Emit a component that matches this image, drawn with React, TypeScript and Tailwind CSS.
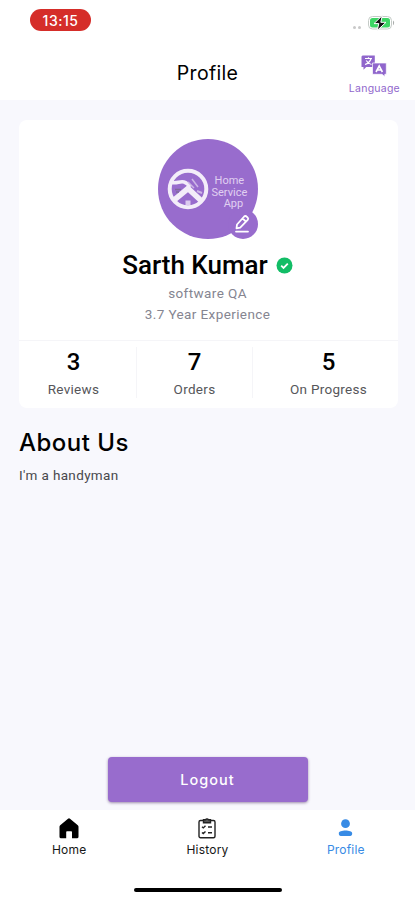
const stats = [
  { value: "3", label: "Reviews", cell: "w-[117px] pr-2" },
  { value: "7", label: "Orders", cell: "w-[117px] border-x border-[#f5f5f8]" },
  { value: "5", label: "On Progress", cell: "w-[145px] pl-1.5" },
];

const BatteryIcon = () => (
  <svg width="27" height="16" viewBox="0 0 27 16">
    <rect x="0.5" y="1.5" width="23" height="12.5" rx="4" fill="#fff" stroke="#c5cbc7" />
    <rect x="2" y="3" width="20" height="9.5" rx="2.5" fill="#3dd564" />
    <path d="M25 5.5c1.5.7 1.5 4 0 4.7z" fill="#a9adab" />
    <path d="M14.3 0.5 6 8.6h4.8L9.2 15.5l8.8-8.2h-5.2z" fill="#111" stroke="#fff" strokeWidth="1" />
  </svg>
);

const LanguageIcon = () => (
  <svg width="26" height="22" viewBox="0 0 26 22">
    <path d="M1.5 0.5h12.3v11.5H5.2L2.5 14.8V12H0.5V1.5z" fill="#9066cc" />
    <path d="M4 3.5h7M7.5 2.2v1.3M10 3.7C9 6.8 7 8.5 4 9.5M5.2 5.5c1.2 2 3 3.3 5.3 4" fill="none" stroke="#fff" strokeWidth="1.2" />
    <path d="M11.5 8h13.8v11.3h-1.5v2.4l-2.8-2.4h-9.5z" fill="#9066cc" stroke="#fff" strokeWidth="0.7" />
    <path d="m15 17 3.2-6 3.2 6M16.2 15h4" fill="none" stroke="#fff" strokeWidth="1.6" />
  </svg>
);

const BrandMark = () => (
  <svg width="42" height="42" viewBox="0 0 42 42" fill="none" stroke="#f3edf9">
    <circle cx="21" cy="21" r="18.3" strokeWidth="4" />
    <path d="M5 14.5c5 1 8-1.5 12-.5 3 .7 4.5 2.5 6 5" strokeWidth="3.5" />
    <path d="m7 32 14-11.5L34.5 33" strokeWidth="5.5" />
    <path d="m21 14 6 6M25 11l6 8" strokeWidth="1.5" stroke="#cdb6e6" />
    <path d="m30 23 5 2" strokeWidth="2" stroke="#cdb6e6" />
    <path d="M18.5 32.5h5v4.5h-5z" fill="#dccbef" stroke="none" />
    <path d="M8 21.5h6M9 24h3" strokeWidth="1.5" stroke="#7e6899" />
  </svg>
);

const EditIcon = () => (
  <svg width="18" height="20" viewBox="0 0 18 20" fill="none" stroke="#fff" strokeWidth="1.8" strokeLinecap="round" strokeLinejoin="round">
    <path d="m3 10.5 7.2-8a1.6 1.6 0 0 1 2.3 0l1.2 1.1a1.6 1.6 0 0 1 0 2.2l-7.5 7.8-3.7.8zM8.6 4.5l3.4 3.2" />
    <path d="M2 17.6h12" />
  </svg>
);

const VerifiedIcon = () => (
  <svg width="17" height="17" viewBox="0 0 17 17">
    <circle cx="8.5" cy="8.5" r="8" fill="#12bd66" />
    <path d="m5.2 8.7 2.3 2.2 4.3-4.3" fill="none" stroke="#fff" strokeWidth="1.8" />
  </svg>
);

const HomeIcon = () => (
  <svg width="20" height="21" viewBox="0 0 20 21">
    <path d="M9 .8a1.5 1.5 0 0 1 2 0l7.8 6.5c.5.4.7.8.7 1.5v9.9a1.5 1.5 0 0 1-1.5 1.5h-5v-6.2a.8.8 0 0 0-.8-.8H8a.8.8 0 0 0-.8.8v6.2H2a1.5 1.5 0 0 1-1.5-1.5V8.8c0-.7.2-1.1.7-1.5z" fill="#000" />
  </svg>
);

const HistoryIcon = () => (
  <svg width="18" height="21" viewBox="0 0 18 21" fill="none" stroke="#222" strokeWidth="1.4">
    <rect x="1" y="2.5" width="16" height="17.3" rx="1.5" />
    <path d="M5.5 1.8h1.8C7.6.5 10.4.5 10.7 1.8h1.8v3h-7z" fill="#555" />
    <path d="m4 8.7 1.3 1.2 2.2-2.2M10 9h4M4 14.4l1.3 1.2 2.2-2.2M10 14.7h4" />
  </svg>
);

const ProfileIcon = () => (
  <svg width="15" height="18" viewBox="0 0 15 18" fill="#388be5">
    <circle cx="7.5" cy="4.7" r="4.4" />
    <path d="M.8 14.3c0-3.6 13.4-3.6 13.4 0 0 2-.7 2.7-2 2.7H2.8c-1.3 0-2-.7-2-2.7z" />
  </svg>
);

const tabs = [
  { label: "Home", icon: <HomeIcon />, color: "text-[#161616]" },
  { label: "History", icon: <HistoryIcon />, color: "text-[#161616]" },
  { label: "Profile", icon: <ProfileIcon />, color: "text-[#388be5]" },
];

export default function App() {
  return (
    <div className="flex h-[900px] w-[415px] flex-col overflow-hidden bg-[#f8f8fd] font-['Inter',sans-serif] text-black">
      <header className="h-[100px] bg-white">
        <div className="flex h-[46px] items-start justify-between pt-[9px] pr-[20px] pl-[30px]">
          <div className="flex h-[22px] w-[61px] items-center justify-center rounded-full bg-[#d52d29] text-[14px] font-medium tracking-[0.5px] text-white">
            13:15
          </div>
          <div className="flex items-center gap-[7px] pt-[6px]">
            <div className="flex gap-[2px] pt-2">
              <span className="size-[3px] rounded-full bg-[#c9c9c9]" />
              <span className="size-[3px] rounded-full bg-[#c9c9c9]" />
            </div>
            <BatteryIcon />
          </div>
        </div>
        <div className="grid h-[54px] grid-cols-[1fr_63px_1fr] items-center">
          <h1 className="col-start-2 text-center text-[19.5px] leading-[54px] tracking-[0.3px]">Profile</h1>
          <div className="flex flex-col items-center justify-self-end pt-[4px] pr-[15px] text-[#9066cc]">
            <LanguageIcon />
            <span className="mt-[5px] text-[10.5px] leading-[14px] tracking-[0.25px]">Language</span>
          </div>
        </div>
      </header>

      <main className="flex flex-1 flex-col px-[19px] pt-5 font-['Roboto',sans-serif]">
        <section className="h-[288px] w-[379px] rounded-lg bg-white">
          <div className="flex h-[221px] flex-col items-center border-b border-[#f5f5f8] pt-[19px]">
            <div className="relative mr-[2px] flex size-[100px] items-center rounded-full bg-[#986ccd] pl-[9px]">
              <BrandMark />
              <div className="ml-[3px] flex flex-col items-center pt-[7px] text-[11px] leading-[11.5px] text-[#e0d0f1]">
                <span>Home</span>
                <span>Service</span>
                <span className="ml-2">App</span>
              </div>
              <div className="absolute top-[70px] left-[70px] flex size-[30px] items-center justify-center rounded-full bg-[#986ccd]">
                <EditIcon />
              </div>
            </div>
            <div className="mt-[10px] mr-[2px] flex h-[32px] items-center gap-2">
              <h2 className="text-[26px] leading-[32px] font-medium">Sarth Kumar</h2>
              <VerifiedIcon />
            </div>
            <p className="mt-[2px] mr-[2px] text-[13.5px] leading-[21px] tracking-[0.4px] text-[#858591]">software QA</p>
            <p className="mr-[2px] text-[13.5px] leading-[21px] tracking-[0.4px] text-[#858591]">3.7 Year Experience</p>
          </div>
          <div className="flex h-[57px] pt-[6px]">
            {stats.map((stat) => (
              <div key={stat.label} className={`flex flex-col items-center ${stat.cell}`}>
                <span className="-mt-1 text-[24px] leading-[38px] font-medium">{stat.value}</span>
                <span className="mt-[-1px] text-[13.5px] leading-[18px] tracking-[0.3px] text-[#56565a]">{stat.label}</span>
              </div>
            ))}
          </div>
        </section>

        <h2 className="mt-[18px] font-['Inter',sans-serif] text-[24px] leading-[34px] font-medium tracking-[0.5px]">About Us</h2>
        <p className="mt-[5px] text-[13.5px] leading-[20px] tracking-[0.35px] text-[#48484c]">I'm a handyman</p>

        <button className="mt-auto mb-[8px] h-[45px] w-[200px] self-center rounded-[4px] bg-[#986ccd] font-['Inter',sans-serif] text-[14.5px] font-medium tracking-[1px] text-white shadow-[0_1px_3px_#9b8aab]">
          Logout
        </button>
      </main>

      <nav className="flex h-[90px] flex-col items-center bg-white">
        <div className="flex h-[78px] w-full">
          {tabs.map((tab) => (
            <div key={tab.label} className={`flex flex-1 flex-col items-center pt-[7px] ${tab.color}`}>
              <div className="flex h-[22px] items-center">{tab.icon}</div>
              <span className="mt-[3px] text-[12px] leading-[16px] tracking-[0.2px]">{tab.label}</span>
            </div>
          ))}
        </div>
        <div className="h-[4px] w-[148px] rounded-full bg-black" />
      </nav>
    </div>
  );
}
